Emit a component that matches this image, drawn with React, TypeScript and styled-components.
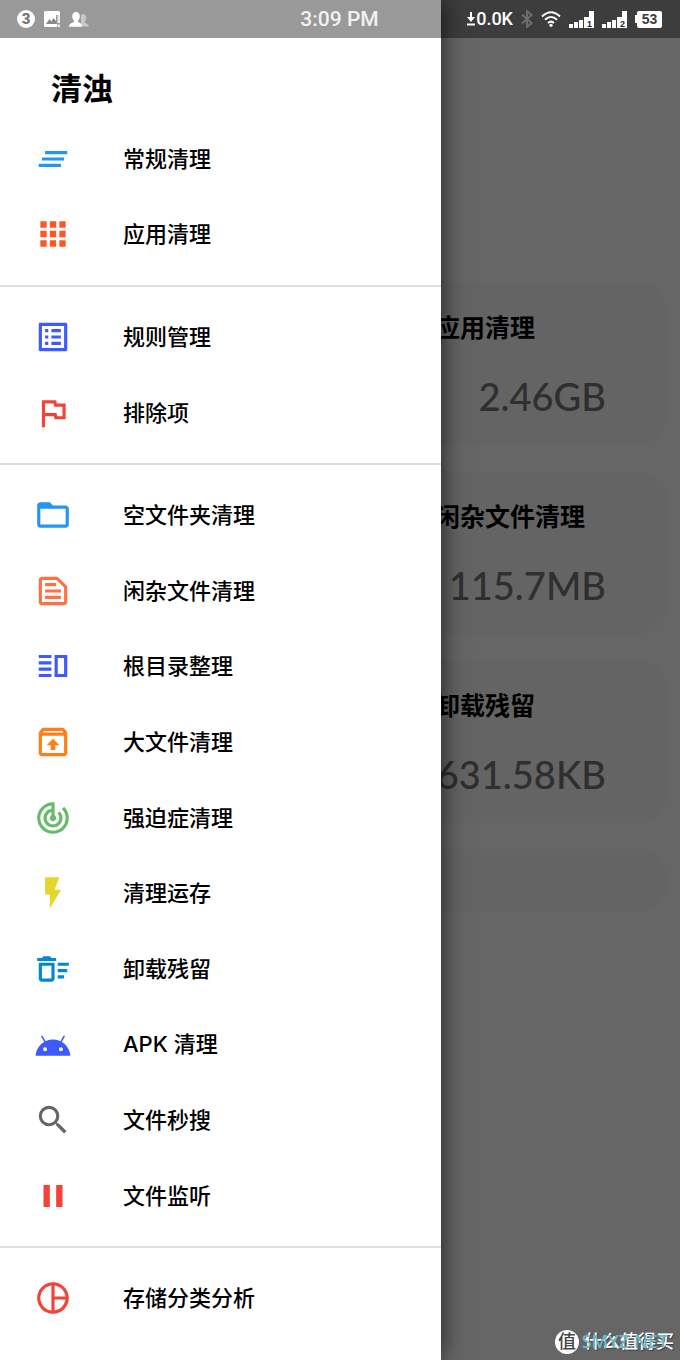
import React from "react";
import styled, { createGlobalStyle } from "styled-components";
import type { IconType } from "react-icons";
import {
  MdApps,
  MdClearAll,
  MdFolderOpen,
  MdOutlineDeleteSweep,
  MdOutlineFlag,
  MdOutlineListAlt,
  MdOutlinePieChart,
  MdOutlineTextSnippet,
  MdOutlineVerticalSplit,
  MdPause,
  MdSearch,
  MdTrackChanges,
} from "react-icons/md";

const GlobalStyle = createGlobalStyle`
  * { box-sizing: border-box; }
  body {
    margin: 0;
    background: #fff;
    font-family: Roboto, "Noto Sans CJK SC", sans-serif;
    color: #000;
  }
`;

const Screen = styled.div`
  position: relative;
  min-height: 100vh;
  overflow: hidden;
`;

const StatusBar = styled.header`
  position: absolute;
  inset: 0 0 auto;
  z-index: 3;
  display: grid;
  grid-template-columns: 1fr auto 1fr;
  align-items: center;
  height: 38px;
  padding: 0 18px 0 17px;
  background: rgba(0, 0, 0, 0.4);
  color: #fff;
`;

const StatusGroup = styled.div<{ $end?: boolean; $gap: number }>`
  display: flex;
  align-items: center;
  justify-content: ${(p) => (p.$end ? "flex-end" : "flex-start")};
  gap: ${(p) => p.$gap}px;

  svg {
    display: block;
    flex: none;
  }
`;

const NoticeCount = styled.span`
  width: 18px;
  height: 18px;
  border-radius: 50%;
  background: #fff;
  color: #777;
  font-size: 15px;
  font-weight: 900;
  line-height: 18px;
  text-align: center;
`;

const Clock = styled.time`
  font-size: 21px;
  font-weight: 500;
  line-height: 38px;
  color: #f2f2f2;
`;

const NetSpeed = styled.span`
  display: flex;
  align-items: center;
  gap: 1px;
  font-size: 18px;
  font-weight: 500;
  line-height: 38px;
`;

const Battery = styled.span`
  display: flex;
  align-items: center;

  &::before {
    content: "";
    width: 2px;
    height: 8px;
    background: #fff;
  }

  span {
    width: 25px;
    height: 17px;
    border-radius: 2px;
    background: #fff;
    color: #3d3d3d;
    font-family: "Liberation Sans", sans-serif;
    font-size: 14px;
    font-weight: 700;
    line-height: 17px;
    text-align: center;
  }
`;

const Dashboard = styled.main`
  display: grid;
  grid-template-columns: 1fr 1fr;
  grid-auto-rows: 163px;
  gap: 26px;
  padding: 282px 13px 0;
`;

const Card = styled.section`
  grid-column: 2;
  display: flex;
  flex-direction: column;
  gap: 28px;
  padding: 29px 61px 0 82px;
  border-radius: 28px;
  background: #f9f9f9;
`;

const WideCard = styled.section`
  grid-column: 1 / -1;
  height: 63px;
  border-radius: 28px;
  background: #f9f9f9;
`;

const CardTitle = styled.h2`
  margin: 0;
  font-size: 25px;
  font-weight: 700;
  line-height: 36px;
  white-space: nowrap;
`;

const CardValue = styled.p`
  display: flex;
  justify-content: flex-end;
  margin: 0;
  font-family: Lato, sans-serif;
  font-size: 38px;
  font-weight: 500;
  line-height: 42px;
  color: #757575;
`;

const Scrim = styled.div`
  position: absolute;
  inset: 0;
  z-index: 1;
  background: rgba(0, 0, 0, 0.6);
`;

const Drawer = styled.aside`
  position: absolute;
  inset: 0 auto 0 0;
  z-index: 2;
  display: flex;
  flex-direction: column;
  width: 441px;
  max-width: 85%;
  padding: 62px 0 24px;
  background: #fff;
  box-shadow: 0 0 24px rgba(0, 0, 0, 0.7);
`;

const AppName = styled.h1`
  margin: 0;
  padding: 0 51px 3px;
  font-size: 31px;
  font-weight: 700;
  line-height: 56px;
`;

const Menu = styled.nav`
  flex: 1;
  display: flex;
  flex-direction: column;
`;

const MenuItem = styled.button`
  flex: 1;
  display: flex;
  align-items: center;
  gap: 51px;
  padding: 0 34px;
  border: 0;
  background: none;
  color: #000;
  font-family: Inter, "Noto Sans CJK SC", sans-serif;
  font-size: 22px;
  font-weight: 500;
  line-height: 32px;
  text-align: left;
  cursor: pointer;
`;

const MenuIcon = styled.span<{ $color: string }>`
  display: flex;
  color: ${(p) => p.$color};
`;

const Divider = styled.hr`
  flex: none;
  width: 100%;
  height: 2px;
  margin: 13px 0 12px;
  border: 0;
  background: #dedede;
`;

const Watermark = styled.div`
  position: absolute;
  right: 6px;
  bottom: 4px;
  z-index: 4;
  display: flex;
  align-items: center;
  gap: 5px;
  color: #fff;
  font-size: 18px;
  font-weight: 500;
  line-height: 28px;
  text-shadow: 1px 1px 1px rgba(0, 0, 0, 0.4);
`;

const WatermarkSeal = styled.span`
  width: 24px;
  height: 24px;
  border-radius: 50%;
  background: #fff;
  color: #444;
  font-size: 18px;
  line-height: 24px;
  text-align: center;
  text-shadow: none;
`;

const WatermarkSite = styled.span`
  position: absolute;
  top: -1px;
  right: 6px;
  color: #6cb9c9;
  font-family: "Noto Sans", sans-serif;
  font-size: 18px;
  text-shadow: none;
`;

type IconProps = { size?: number | string };

const BoltIcon = ({ size }: IconProps) => (
  <svg width={size} height={size} viewBox="0 0 24 24" fill="currentColor">
    <path d="M7 2v11h3v9l7-12h-4l3-8z" />
  </svg>
);

const UnarchiveIcon = ({ size }: IconProps) => (
  <svg width={size} height={size} viewBox="0 0 24 24" fill="currentColor">
    <path d="M20.55 5.22l-1.39-1.68C18.88 3.21 18.47 3 18 3H6c-.47 0-.88.21-1.15.55L3.46 5.22C3.17 5.57 3 6.01 3 6.5V19c0 1.1.89 2 2 2h14c1.1 0 2-.9 2-2V6.5c0-.49-.17-.93-.45-1.28zM6.24 5h11.52l.83 1H5.42l.82-1zM5 19V8h14v11H5zm3-5h2.55v3h2.9v-3H16l-4-4-4 4z" />
  </svg>
);

const AndroidIcon = ({ size }: IconProps) => (
  <svg width={size} height={size} viewBox="0 0 24 24" fill="currentColor">
    <path
      fillRule="evenodd"
      d="M1 19.400C1.500 13.500 6.300 9.200 12 9.200s10.500 4.300 11 10.200zM7 14a1.250 1.250 0 1 0 0 2.500A1.250 1.250 0 0 0 7 14zM17 14a1.250 1.250 0 1 0 0 2.500A1.250 1.250 0 0 0 17 14z"
    />
    <path fill="none" stroke="currentColor" strokeLinecap="round" d="M5 7.200l2.200 3.800M19 7.200l-2.200 3.800" />
  </svg>
);

type Entry = { label: string; color: string; Icon: IconType | typeof BoltIcon };

const groups: Entry[][] = [
  [
    { label: "常规清理", color: "#2196f3", Icon: MdClearAll },
    { label: "应用清理", color: "#ff5722", Icon: MdApps },
  ],
  [
    { label: "规则管理", color: "#3d5afe", Icon: MdOutlineListAlt },
    { label: "排除项", color: "#f44336", Icon: MdOutlineFlag },
  ],
  [
    { label: "空文件夹清理", color: "#2196f3", Icon: MdFolderOpen },
    { label: "闲杂文件清理", color: "#ff7043", Icon: MdOutlineTextSnippet },
    { label: "根目录整理", color: "#3d5afe", Icon: MdOutlineVerticalSplit },
    { label: "大文件清理", color: "#ff7f17", Icon: UnarchiveIcon },
    { label: "强迫症清理", color: "#66bb6a", Icon: MdTrackChanges },
    { label: "清理运存", color: "#e6d52a", Icon: BoltIcon },
    { label: "卸载残留", color: "#0288d1", Icon: MdOutlineDeleteSweep },
    { label: "APK 清理", color: "#3d5afe", Icon: AndroidIcon },
    { label: "文件秒搜", color: "#666666", Icon: MdSearch },
    { label: "文件监听", color: "#f44336", Icon: MdPause },
  ],
  [{ label: "存储分类分析", color: "#f44336", Icon: MdOutlinePieChart }],
];

const cards = [
  { title: "应用清理", value: "2.46GB" },
  { title: "闲杂文件清理", value: "115.7MB" },
  { title: "卸载残留", value: "631.58KB" },
];

const PictureIcon = () => (
  <svg width="16" height="16" viewBox="0 0 16 16">
    <path
      fill="#fff"
      d="M1.500 0h13A1.500 1.500 0 0 1 16 1.500V4h-4v9h1v3H1.500A1.500 1.500 0 0 1 0 14.500v-13A1.500 1.500 0 0 1 1.500 0z"
    />
    <path fill="#888" d="M2 13l3.500-5 2 2.500L9.500 7l2.500 3v3z" />
    <path fill="#fff" d="M13.500 4H16v8h-2.500zM13.500 13.500H16V16h-2.500z" opacity=".8" />
  </svg>
);

const ContactsIcon = () => (
  <svg width="20" height="15" viewBox="0 0 20 15">
    <path
      fill="#fff"
      opacity=".45"
      d="M14 2c2 0 3.300 1.500 3.300 3.800 0 1.500-.6 2.800-1.400 3.600v1.300c1.500.8 4.100 1.200 4.100 3.800h-8V3z"
    />
    <path
      fill="#fff"
      d="M7 0c2.300 0 3.800 1.700 3.800 4.200 0 1.800-.7 3.300-1.700 4.200v1.500c1.600 1 4.100 1.400 4.100 4.800H0c0-3.400 3.300-3.800 4.900-4.800V8.400c-1-.9-1.700-2.400-1.700-4.200C3.200 1.700 4.700 0 7 0z"
    />
  </svg>
);

const DownloadIcon = () => (
  <svg width="8" height="14" viewBox="0 0 8 14" fill="#fff">
    <path d="M3 0h2v5h3l-4 5L0 5h3zM0 11.500h8v2H0z" />
  </svg>
);

const BluetoothIcon = () => (
  <svg width="12" height="18" viewBox="1 0 12 18" fill="none" stroke="#6d6d6d" strokeWidth="2">
    <path d="M2 4.500l9.500 8.500L7 17V1l4.500 4L2 13.500" />
  </svg>
);

const WifiIcon = () => (
  <svg width="20" height="16" viewBox="0 0 20 16" fill="none" stroke="#fff" strokeWidth="2">
    <path d="M1 5.500Q10-3 19 5.500M4 8.800Q10 3.200 16 8.800M7 12Q10 9.300 13 12" />
    <circle cx="10" cy="14.300" r="1.600" fill="#fff" stroke="none" />
  </svg>
);

const SignalIcon = ({ sim }: { sim: number }) => (
  <svg width="25" height="17" viewBox="0 0 25 17">
    <path
      fill="#fff"
      d="M0 13h4v4H0zM5 11h4v6H5zM10 9h4v8h-4zM15 6h4v11h-4zM20 0h5v17h-6V6h1z"
    />
    <text x="18" y="16" fontFamily="Liberation Sans, sans-serif" fontSize="9" fontWeight="700" fill="#222">
      {sim}
    </text>
  </svg>
);

export default function App() {
  return (
    <Screen>
      <GlobalStyle />
      <StatusBar>
        <StatusGroup $gap={9}>
          <NoticeCount>3</NoticeCount>
          <PictureIcon />
          <ContactsIcon />
        </StatusGroup>
        <Clock>3:09 PM</Clock>
        <StatusGroup $end $gap={8}>
          <NetSpeed>
            <DownloadIcon />
            0.0K
          </NetSpeed>
          <BluetoothIcon />
          <WifiIcon />
          <SignalIcon sim={1} />
          <SignalIcon sim={2} />
          <Battery>
            <span>53</span>
          </Battery>
        </StatusGroup>
      </StatusBar>

      <Dashboard>
        {cards.map((card) => (
          <Card key={card.title}>
            <CardTitle>{card.title}</CardTitle>
            <CardValue>{card.value}</CardValue>
          </Card>
        ))}
        <WideCard />
      </Dashboard>
      <Scrim />

      <Drawer>
        <AppName>清浊</AppName>
        <Menu>
          {groups.map((group, index) => (
            <React.Fragment key={group[0].label}>
              {index > 0 && <Divider />}
              {group.map(({ label, color, Icon }) => (
                <MenuItem key={label} type="button">
                  <MenuIcon $color={color}>
                    <Icon size={38} />
                  </MenuIcon>
                  {label}
                </MenuItem>
              ))}
            </React.Fragment>
          ))}
        </Menu>
      </Drawer>

      <Watermark>
        <WatermarkSeal>值</WatermarkSeal>
        什么值得买
        <WatermarkSite>SMYZ.NET</WatermarkSite>
      </Watermark>
    </Screen>
  );
}
